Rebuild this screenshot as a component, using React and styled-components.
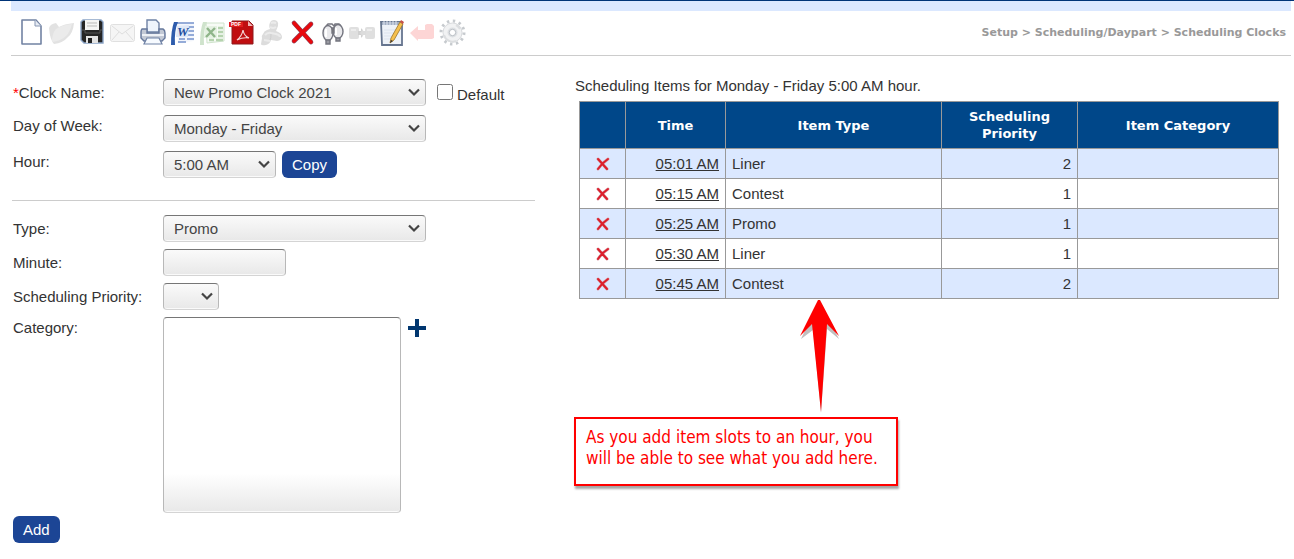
import React from "react";
import styled, { createGlobalStyle, css } from "styled-components";

const GlobalStyle = createGlobalStyle`
* {
  box-sizing: border-box;
}
body {
  margin: 0;
  background: #fff;
  color: #333;
  font: 15px/22px "Liberation Sans", Arial, sans-serif;
}
`

const Page = styled.div`
border-top: 1px solid #003478;
padding: 0 3px 0 11px;
`

const Banner = styled.div`
height: 10px;
background: #dbe8ff;
`

const Header = styled.header`
display: flex;
align-items: center;
justify-content: space-between;
height: 45px;
padding: 0 5px;
border-bottom: 1px solid #ccc;
`

const Toolbar = styled.div`
display: flex;
`

const ToolButton = styled.button`
display: flex;
width: 30px;
height: 30px;
padding: 0;
border: 0;
background: none;
cursor: pointer;
`

const Breadcrumb = styled.nav`
color: #999;
font: bold 11px/16px Verdana, "DejaVu Sans", sans-serif;
`

const Columns = styled.main`
display: grid;
grid-template-columns: 524px minmax(0, 1fr);
gap: 40px;
padding-right: 12px;
`

const Section = styled.section`
display: flex;
flex-direction: column;
gap: ${p => p.$gap}px;
padding: ${p => p.$top}px 0 0 2px;
`

const Divider = styled.hr`
height: 1px;
margin: 22px 0 0 1px;
border: 0;
background: #ccc;
`

const Row = styled.div`
display: flex;
align-items: ${p => p.$align || "center"};
`

const Label = styled.label`
flex: none;
width: 150px;
`

const Required = styled.span`
color: #f00;
`

const field = css`
width: ${p => p.$width}px;
height: 27px;
margin: 0;
color: #444;
font: inherit;
border: 1px solid #b8b8b8;
border-top-color: #767676;
border-bottom-color: #d4d4d4;
border-radius: 4px;
background: linear-gradient(#fafafa, #e8e8e8);
box-shadow: inset 0 -1px #fafafa;
`

const chevron = `url("data:image/svg+xml,%3Csvg xmlns='http://www.w3.org/2000/svg' width='14' height='9'%3E%3Cpath d='M2 1.500l5 5 5-5' fill='none' stroke='%23444' stroke-width='2.200'/%3E%3C/svg%3E")`

const Select = styled.select`
${field}
appearance: none;
padding: 0 24px 0 10px;
background: ${chevron} no-repeat right 4px center, linear-gradient(#fafafa, #e8e8e8);
`

const Input = styled.input`
${field}
padding: 0 10px;
`

const ListBox = styled.select`
${field}
height: 196px;
padding: 4px;
background: linear-gradient(#fff 80%, #e8e8e8);
`

const CheckLabel = styled.label`
display: flex;
align-self: flex-end;
gap: 4px;
margin-left: 11px;
`

const Checkbox = styled.input`
width: 16px;
height: 16px;
margin: 0;
`

const Button = styled.button`
height: 27px;
padding: 0 10px;
border: 0;
border-radius: 6px;
background: #1c4595;
color: #fff;
font: inherit;
cursor: pointer;
`

const CopyButton = styled(Button)`
margin-left: 6px;
`

const AddButton = styled(Button)`
margin: 3px 0 0 2px;
`

const PlusButton = styled.button`
display: flex;
margin: 0 0 0 6px;
padding: 0;
border: 0;
background: none;
cursor: pointer;
`

const Results = styled.section`
padding-top: 19px;
`

const Title = styled.p`
margin: 0 0 4px;
`

const Table = styled.table`
width: calc(100% - 4px);
margin-left: 4px;
border-collapse: collapse;
table-layout: fixed;
`

const Th = styled.th`
width: ${p => p.$width};
height: 47px;
padding: 0 16px;
border: 1px solid #999;
background: #004789;
color: #fff;
font: bold 13px/17px Verdana, "DejaVu Sans", sans-serif;
`

const Tr = styled.tr`
&:nth-child(odd) {
  background: #dbe8ff;
}
`

const Td = styled.td`
height: 30px;
padding: 0 6px;
border: 1px solid #999;
text-align: ${p => p.$align || "left"};
`

const TimeLink = styled.a`
color: #333;
text-decoration: underline;
`

const DeleteButton = styled.button`
display: block;
margin: 0 auto;
padding: 0;
border: 0;
background: none;
cursor: pointer;

svg {
  display: block;
}
`

const Note = styled.aside`
width: 324px;
margin-left: -1px;
`

const NoteArrow = styled.svg`
display: block;
margin-left: 223px;
`

const NoteText = styled.p`
height: 69px;
margin: 0;
padding: 8px 10px;
border: 2px solid #f00;
background: #fff;
box-shadow: 1px 3px 2px rgba(0, 0, 0, 0.35);
color: #f00;
font: 17px/21px Tahoma, "DejaVu Sans Condensed", sans-serif;
`

const tools = [
  {
    name: "New",
    icon: (
      <>
        <path d="M6 2h14l5 6v18H6z" fill="#fff" stroke="#7283a3" strokeWidth="1.6" strokeLinejoin="round" />
        <path d="M19 2v6h6" fill="#e6ebf3" stroke="#8796b2" />
      </>
    ),
  },
  {
    name: "Open",
    icon: (
      <>
        <path d="M3 10q1-4 7-5l3 4q5-3 15-4-1 10-6 14-5 6-14 7-4-4-5-16z" fill="#e2e2e2" />
        <path d="M6 24q0-9 4-13 6-4 16-5-2 8-6 12-5 5-14 6z" fill="#ebebeb" />
      </>
    ),
  },
  {
    name: "Save",
    icon: (
      <>
        <path d="M7 2h18l2 2v21H8l-3-3V4z" fill="#252525" stroke="#8ba4c6" strokeWidth="1.4" />
        <path d="M9 2h14v10H9z" fill="#f4f4f4" />
        <path d="M11 5h10M11 8h10" stroke="#b9b9b9" />
        <path d="M6 12h3v3h15v-3h2" fill="none" stroke="#555" />
        <path d="M10 18h12v7H10z" fill="#e3e3e3" />
        <path d="M12 20h4v5h-4z" fill="#222" />
      </>
    ),
  },
  {
    name: "Email",
    icon: (
      <>
        <rect x="4.5" y="6.5" width="24" height="17" rx="2" fill="#f5f5f5" stroke="#e0e0e0" />
        <path d="M6 8l10 8 11-8M6 22l7-8M27 22l-7-8" fill="none" stroke="#dedede" />
      </>
    ),
  },
  {
    name: "Print",
    icon: (
      <>
        <path d="M11 2h9l3 3v9H11z" fill="#eef4fc" stroke="#6f82a5" strokeWidth="1.4" />
        <path d="M6 11h5v4h12v-4h4q2 1 2 4v5l-3 3H8l-3-3v-6q0-2 1-3z" fill="#c3c9d5" stroke="#66789c" strokeWidth="1.4" />
        <path d="M6 17h22" stroke="#eef1f6" strokeWidth="2" />
        <path d="M11 20h12l3 6H8z" fill="#f6faff" stroke="#6f82a5" strokeWidth="1.2" />
      </>
    ),
  },
  {
    name: "Export to Word",
    icon: (
      <>
        <path d="M11 5h17v18l-16 2z" fill="#f3f6fc" />
        <path d="M11 5h17M22 9h6M22 13h6M22 17h6M13 21h6M21 21h7M12 24h8" stroke="#7592cc" strokeWidth="1.6" />
        <path d="M8 4h4Q8 13 9 27H5Q5 12 8 4z" fill="#2e5cac" />
        <path d="M11 8l12-1-1 12H10z" fill="#dfe8f7" />
        <text x="11" y="18" fill="#2450a0" fontFamily="Liberation Serif, serif" fontWeight="bold" fontStyle="italic" fontSize="13">W</text>
      </>
    ),
  },
  {
    name: "Export to Excel",
    icon: (
      <>
        <path d="M10 5h18v18l-17 2z" fill="#f7fbf6" stroke="#cfe3cc" />
        <path d="M22 10h5M22 14h5M22 18h5M13 22h5M20 22h7" stroke="#b5d3ae" strokeWidth="2.4" />
        <path d="M7 4h4Q7 13 8 27H4Q4 12 7 4z" fill="#cfe3cc" />
        <path d="M9 8h12v12H8z" fill="#e5f1e2" />
        <path d="M11 10l8 9M19 10l-9 9" stroke="#8fb58a" strokeWidth="2.4" />
      </>
    ),
  },
  {
    name: "Export to PDF",
    icon: (
      <>
        <path d="M6 3h17l4 4v19H6z" fill="#c00d10" stroke="#8e1a1c" />
        <path d="M22 3v5h5z" fill="#eeb5b5" />
        <path d="M3 4h14v5H3z" fill="#e01b1e" />
        <text x="5" y="8" fill="#fff" fontFamily="Liberation Sans, sans-serif" fontWeight="bold" fontSize="5">PDF</text>
        <path d="M11 22q5-4 6-10 1 6 6 8-6-1-12 2z" fill="none" stroke="#f5d5d5" strokeWidth="1.2" />
      </>
    ),
  },
  {
    name: "Approve",
    icon: (
      <>
        <path d="M15 3q3-2 6 0 2 2 1 5l-2 5q6 2 6 6 0 3-5 4l-6-1q-1 4-5 5-5 1-5-1l1-6q-1-2 1-4 1-3 4-4l3-1q-2-4 1-8z" fill="#dcdcdc" />
        <path d="M9 17q3-3 6-2l5 1q4 1 4 3M8 22l6 1M15 5q2-1 5 0M14 9q3 2 6 0" fill="none" stroke="#ebebeb" strokeWidth="2" />
        <path d="M15 16q0 4-1 6" fill="none" stroke="#cfcfcf" />
      </>
    ),
  },
  {
    name: "Delete",
    icon: (
      <>
        <path d="M8 5l17 19M25 6L8 23" stroke="#8a4a62" strokeWidth="4.6" strokeLinecap="round" />
        <path d="M8 5l17 19M25 6L8 23" stroke="#e8090d" strokeWidth="3.4" strokeLinecap="round" />
      </>
    ),
  },
  {
    name: "Find",
    icon: (
      <g fill="#e9e9ec" stroke="#74757f" strokeWidth="1.4">
        <path d="M10 8l2-2h4l2 2 1-2h4l2 2" fill="none" />
        <ellipse cx="22" cy="13.5" rx="5" ry="7" />
        <path d="M20 20h4v3h-4z" fill="#9a9ba3" />
        <ellipse cx="12" cy="15" rx="5" ry="7.500" />
        <path d="M10 22h4v4h-4z" fill="#9a9ba3" />
        <path d="M10 11v8M20 10v7" stroke="#fff" strokeWidth="2" />
        <path d="M16 10h2v5h-2z" fill="#777" />
      </g>
    ),
  },
  {
    name: "Merge",
    icon: (
      <>
        <rect x="3" y="9" width="10" height="12" rx="2" fill="#dfdfdf" />
        <rect x="19" y="9" width="10" height="12" rx="2" fill="#dfdfdf" />
        <path d="M12 13h3v-3l4 5-4 5v-3h-3z" fill="#d0d0d0" />
        <path d="M20 13h-3v-2l-3 4 3 4v-2h3z" fill="#dcdcdc" />
        <path d="M5 12h5M21 12h5" stroke="#ededed" strokeWidth="2" />
      </>
    ),
  },
  {
    name: "Notes",
    icon: (
      <>
        <path d="M5 4h21v23H6z" fill="#eef2f8" stroke="#66758f" strokeWidth="1.8" />
        <path d="M6 4h20v3H6z" fill="#a3afc4" />
        <path d="M8 3v4M11 3v4M14 3v4M17 3v4M20 3v4" stroke="#dfe5ef" />
        <path d="M8 12h13M8 15h11M8 18h8M8 21h7" stroke="#dce3ee" />
        <path d="M24 4L15 20l-1 5 4-3L27 6z" fill="#f5c04f" stroke="#9c7328" strokeWidth="0.8" />
        <path d="M24 4l1-2 3 2-1 2z" fill="#c95148" />
        <path d="M14 25l1-3 2 1z" fill="#333" />
      </>
    ),
  },
  {
    name: "Back",
    icon: <path d="M4 15l8-7v4h7V7l2-1h5l2 2v12l-2 1H12v2z" fill="#fdd5d5" />,
  },
  {
    name: "Settings",
    icon: (
      <>
        <circle cx="16.5" cy="14.5" r="11.5" fill="none" stroke="#c6cace" strokeWidth="3" strokeDasharray="2.4 3.62" />
        <circle cx="16.5" cy="14.5" r="9.5" fill="#f1f2f3" stroke="#d8dadd" />
        <path d="M8 17a9 9 0 0 0 12 6M24 11a9 9 0 0 0-4-4" fill="none" stroke="#dcdee0" strokeWidth="2" />
        <circle cx="16.5" cy="14.5" r="5" fill="#dde0e3" />
        <circle cx="16.500" cy="14.500" r="3.200" fill="#fff" stroke="#b9bec4" />
      </>
    ),
  },
];

const items = [
  { time: "05:01 AM", type: "Liner", priority: 2 },
  { time: "05:15 AM", type: "Contest", priority: 1 },
  { time: "05:25 AM", type: "Promo", priority: 1 },
  { time: "05:30 AM", type: "Liner", priority: 1 },
  { time: "05:45 AM", type: "Contest", priority: 2 },
];

const ClockForm = () => (
  <Section $top={23} $gap={9}>
    <Row>
      <Label htmlFor="clock"><Required>*</Required>Clock Name:</Label>
      <Select id="clock" $width={263}>
        <option>New Promo Clock 2021</option>
      </Select>
      <CheckLabel>
        <Checkbox type="checkbox" />
        Default
      </CheckLabel>
    </Row>
    <Row $align="flex-start">
      <Label htmlFor="day">Day of Week:</Label>
      <Select id="day" $width={263}>
        <option>Monday - Friday</option>
      </Select>
    </Row>
    <Row $align="flex-start">
      <Label htmlFor="hour">Hour:</Label>
      <Select id="hour" $width={113}>
        <option>5:00 AM</option>
      </Select>
      <CopyButton type="button">Copy</CopyButton>
    </Row>
  </Section>
);

const ItemForm = () => (
  <>
    <Section $top={14} $gap={7}>
      <Row>
        <Label htmlFor="type">Type:</Label>
        <Select id="type" $width={263}>
          <option>Promo</option>
        </Select>
      </Row>
      <Row>
        <Label htmlFor="minute">Minute:</Label>
        <Input id="minute" type="text" $width={123} />
      </Row>
      <Row>
        <Label htmlFor="priority">Scheduling Priority:</Label>
        <Select id="priority" $width={56}>
          <option></option>
        </Select>
      </Row>
      <Row $align="flex-start">
        <Label htmlFor="category">Category:</Label>
        <ListBox id="category" multiple $width={238} />
        <PlusButton type="button" aria-label="Add category">
          <svg width="20" height="22" viewBox="0 0 20 22">
            <path d="M10 2v18M1 11h18" stroke="#00366f" strokeWidth="4" />
          </svg>
        </PlusButton>
      </Row>
    </Section>
    <AddButton type="button">Add</AddButton>
  </>
);

const ItemTable = () => (
  <Table>
    <thead>
      <tr>
        <Th $width="46px" aria-label="Delete" />
        <Th $width="100px">Time</Th>
        <Th $width="216px">Item Type</Th>
        <Th $width="136px">Scheduling Priority</Th>
        <Th>Item Category</Th>
      </tr>
    </thead>
    <tbody>
      {items.map(item => (
        <Tr key={item.time}>
          <Td>
            <DeleteButton type="button" aria-label={`Delete ${item.time}`}>
              <svg width="14" height="14" viewBox="0 0 14 14" strokeLinecap="round">
                <path d="M2 2l9 10M12 2Q6 6 2 12" fill="none" stroke="#d79aa3" strokeWidth="3" />
                <path d="M2 2l9 10M12 2Q6 6 2 12" fill="none" stroke="#dc1f2c" strokeWidth="2" />
              </svg>
            </DeleteButton>
          </Td>
          <Td $align="right"><TimeLink href="#">{item.time}</TimeLink></Td>
          <Td>{item.type}</Td>
          <Td $align="right">{item.priority}</Td>
          <Td />
        </Tr>
      ))}
    </tbody>
  </Table>
);

const App = () => {
  return (
    <>
      <GlobalStyle />
      <Page>
        <Banner />
        <Header>
          <Toolbar>
            {tools.map(tool => (
              <ToolButton key={tool.name} type="button" aria-label={tool.name}>
                <svg width="30" height="30" viewBox="0 0 30 30">{tool.icon}</svg>
              </ToolButton>
            ))}
          </Toolbar>
          <Breadcrumb>Setup &gt; Scheduling/Daypart &gt; Scheduling Clocks</Breadcrumb>
        </Header>
        <Columns>
          <div>
            <ClockForm />
            <Divider />
            <ItemForm />
          </div>
          <Results>
            <Title>Scheduling Items for Monday - Friday 5:00 AM hour.</Title>
            <ItemTable />
            <Note>
              <NoteArrow width="46" height="118" viewBox="0 0 46 118">
                <path d="M21 3l2 0 19 37-12-10-6 84-8-83-12 9z" fill="#000" opacity="0.25" />
                <path d="M21 1h2l19 36-12-12-6 88-9-88-12 12z" fill="#f00" />
              </NoteArrow>
              <NoteText>As you add item slots to an hour, you will be able to see what you add here.</NoteText>
            </Note>
          </Results>
        </Columns>
      </Page>
    </>
  );
};

export default App;
